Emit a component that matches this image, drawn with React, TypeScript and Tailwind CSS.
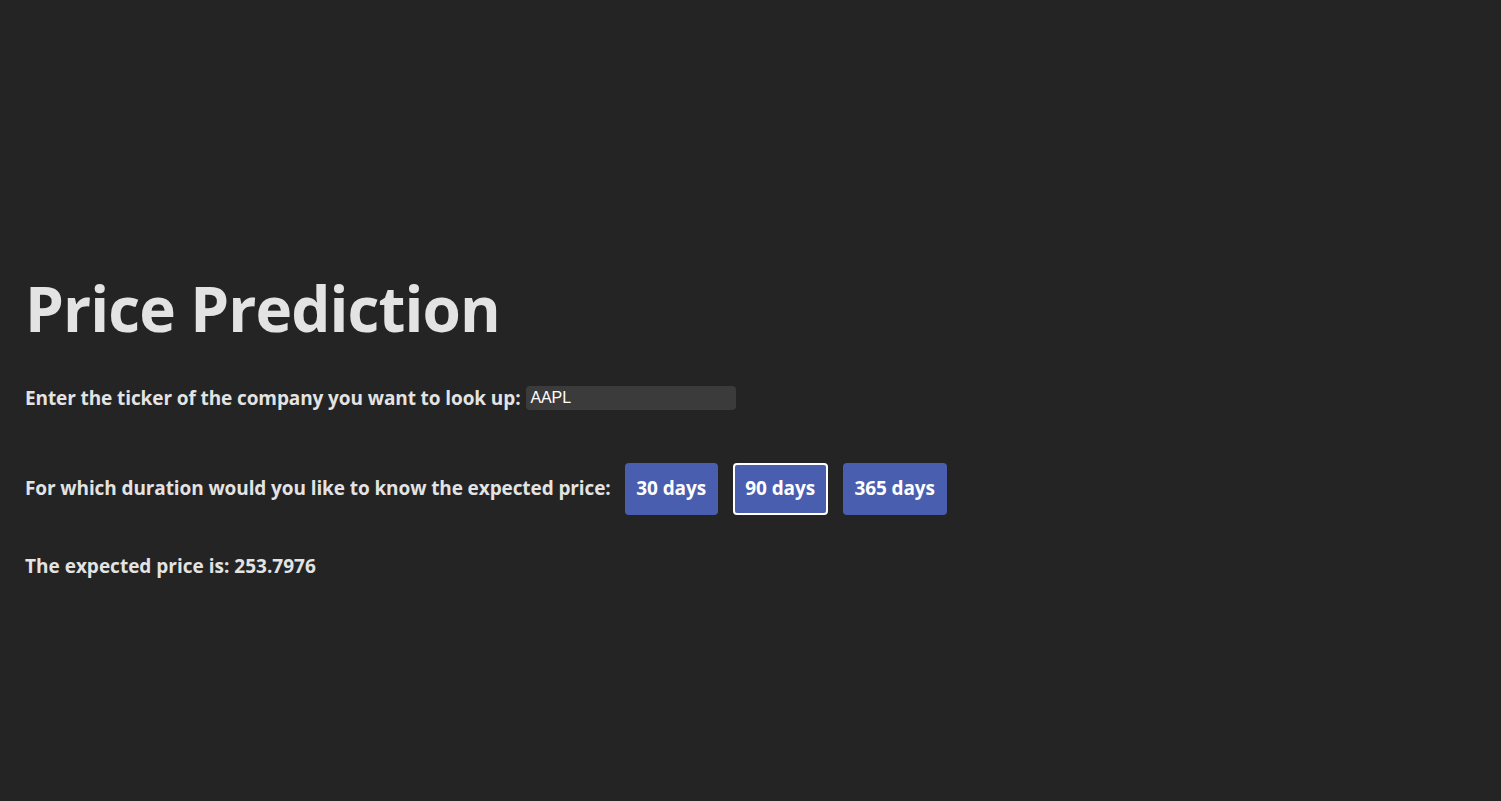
import React from "react";

export default function App() {
  return (
    <div className="min-h-screen w-full bg-[#242424] text-[#e3e3e3]">
      <div className="pl-[25px] pt-[274px] font-['Open_Sans',sans-serif]">
        <h1 className="text-[62px] font-bold leading-[1.1] tracking-[-0.9px]">Price Prediction</h1>
        <div className="mt-[42px] flex items-center text-[19px] font-bold tracking-[-0.1px]">
          <span>Enter the ticker of the company you want to look up:</span>
          <input
            defaultValue="AAPL"
            className="ml-[6px] w-[210px] h-[24px] rounded-[4px] bg-[#3b3b3b] px-[4px] text-[16px] font-normal text-white font-['Liberation_Sans',sans-serif] outline-none"
          />
        </div>
        <div className="mt-[50px] flex items-center text-[19px] font-bold tracking-[-0.1px]">
          <span>For which duration would you like to know the expected price:</span>
          <div className="ml-[14px] flex gap-[15px]">
            <button className="h-[52px] w-[93px] rounded-[4px] bg-[#4a5eb0] text-white border border-transparent">30 days</button>
            <button className="h-[52px] w-[95px] rounded-[4px] bg-[#4a5eb0] text-white border-2 border-white">90 days</button>
            <button className="h-[52px] w-[104px] rounded-[4px] bg-[#4a5eb0] text-white border border-transparent">365 days</button>
          </div>
        </div>
        <div className="mt-[37px] text-[19px] font-bold">The expected price is: 253.7976</div>
      </div>
    </div>
  );
}
